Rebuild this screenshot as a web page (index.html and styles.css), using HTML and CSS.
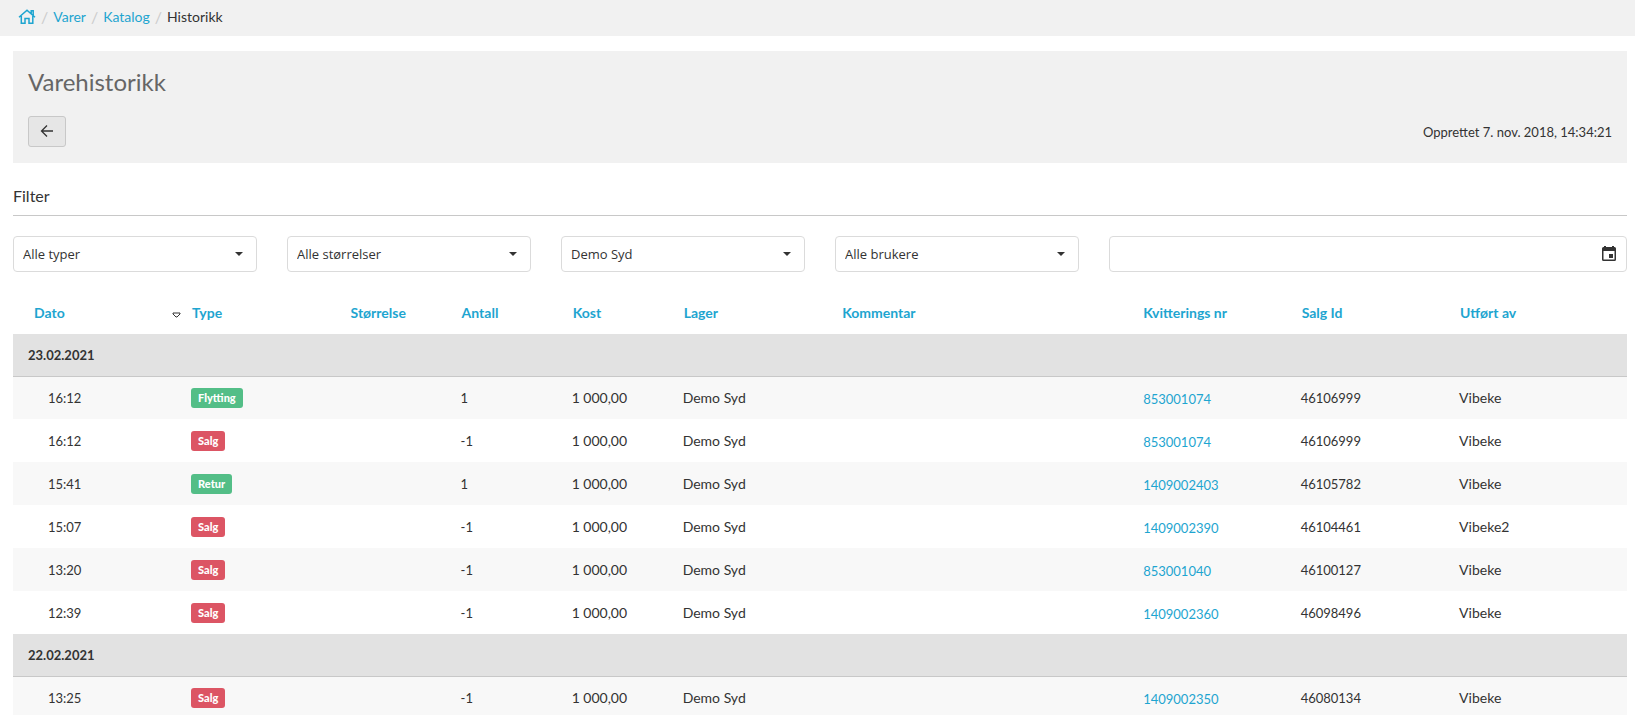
FILE: index.html
```html
<!doctype html>
<html lang="no">
<head>
	<meta charset="utf-8">
	<title>Varehistorikk</title>
	<meta name="viewport" content="width=device-width, initial-scale=1">
	<link rel="stylesheet" href="styles.css">
</head>
<body>
	<nav class="breadcrumb" aria-label="Brødsmulesti">
		<a href="#" class="home" aria-label="Hjem"><svg viewBox="0 0 18 16"><path d="M1 8.2L9 1.2L17 8.2M13.2 4.6V1.8H15.2V6.4M3.3 7V14.2H7V9.6H11V14.2H14.8V7"></path></svg></a>
		<span class="slash">/</span>
		<a href="#">Varer</a>
		<span class="slash">/</span>
		<a href="#">Katalog</a>
		<span class="slash">/</span>
		<span>Historikk</span>
	</nav>
	<main>
		<header class="panel">
			<h1>Varehistorikk</h1>
			<div class="toolbar">
				<button type="button" class="back" aria-label="Tilbake"><svg viewBox="0 0 14 14"><path d="M13 7H1.5M7 1.5L1.5 7L7 12.5"></path></svg></button>
				<span class="created">Opprettet 7. nov. 2018, 14:34:21</span>
			</div>
		</header>
		<h2>Filter</h2>
		<form class="filters">
			<div class="select">
				<select aria-label="Type"><option>Alle typer</option></select>
			</div>
			<div class="select">
				<select aria-label="Størrelse"><option>Alle størrelser</option></select>
			</div>
			<div class="select">
				<select aria-label="Lager"><option>Demo Syd</option></select>
			</div>
			<div class="select">
				<select aria-label="Bruker"><option>Alle brukere</option></select>
			</div>
			<div class="date">
				<input type="text" aria-label="Dato">
				<button type="button" aria-label="Velg dato"><svg viewBox="0 0 14 16"><path fill-rule="evenodd" d="M2 1V0H4V1H10V0H12V1H12.5Q14 1 14 2.5V13.5Q14 15 12.5 15H1.5Q0 15 0 13.5V2.5Q0 1 1.5 1ZM1.5 5V13.5H12.5V5ZM7 8H11V12H7Z"></path></svg></button>
			</div>
		</form>
		<table class="history">
			<colgroup>
				<col class="col-date">
				<col class="col-medium">
				<col class="col-small">
				<col class="col-small">
				<col class="col-small">
				<col class="col-medium">
				<col class="col-large">
				<col class="col-medium">
				<col class="col-medium">
				<col>
			</colgroup>
			<thead>
				<tr>
					<th><div class="sorted"><a href="#">Dato</a><svg viewBox="0 0 9 6"><path d="M1 1H8V2L5 5H4L1 2Z"></path></svg></div></th>
					<th><a href="#">Type</a></th>
					<th><a href="#">Størrelse</a></th>
					<th><a href="#">Antall</a></th>
					<th><a href="#">Kost</a></th>
					<th><a href="#">Lager</a></th>
					<th><a href="#">Kommentar</a></th>
					<th><a href="#">Kvitterings nr</a></th>
					<th><a href="#">Salg Id</a></th>
					<th><a href="#">Utført av</a></th>
				</tr>
			</thead>
			<tbody>
				<tr class="group"><th colspan="10">23.02.2021</th></tr>
				<tr><td class="num">16:12</td><td><span class="badge green">Flytting</span></td><td></td><td class="num">1</td><td>1 000,00</td><td>Demo Syd</td><td></td><td class="num link"><a href="#">853001074</a></td><td class="num">46106999</td><td>Vibeke</td></tr>
				<tr><td class="num">16:12</td><td><span class="badge red">Salg</span></td><td></td><td class="num">-1</td><td>1 000,00</td><td>Demo Syd</td><td></td><td class="num link"><a href="#">853001074</a></td><td class="num">46106999</td><td>Vibeke</td></tr>
				<tr><td class="num">15:41</td><td><span class="badge green">Retur</span></td><td></td><td class="num">1</td><td>1 000,00</td><td>Demo Syd</td><td></td><td class="num link"><a href="#">1409002403</a></td><td class="num">46105782</td><td>Vibeke</td></tr>
				<tr><td class="num">15:07</td><td><span class="badge red">Salg</span></td><td></td><td class="num">-1</td><td>1 000,00</td><td>Demo Syd</td><td></td><td class="num link"><a href="#">1409002390</a></td><td class="num">46104461</td><td>Vibeke2</td></tr>
				<tr><td class="num">13:20</td><td><span class="badge red">Salg</span></td><td></td><td class="num">-1</td><td>1 000,00</td><td>Demo Syd</td><td></td><td class="num link"><a href="#">853001040</a></td><td class="num">46100127</td><td>Vibeke</td></tr>
				<tr><td class="num">12:39</td><td><span class="badge red">Salg</span></td><td></td><td class="num">-1</td><td>1 000,00</td><td>Demo Syd</td><td></td><td class="num link"><a href="#">1409002360</a></td><td class="num">46098496</td><td>Vibeke</td></tr>
			</tbody>
			<tbody>
				<tr class="group"><th colspan="10">22.02.2021</th></tr>
				<tr><td class="num">13:25</td><td><span class="badge red">Salg</span></td><td></td><td class="num">-1</td><td>1 000,00</td><td>Demo Syd</td><td></td><td class="num link"><a href="#">1409002350</a></td><td class="num">46080134</td><td>Vibeke</td></tr>
			</tbody>
		</table>
	</main>
</body>
</html>
```
FILE: styles.css
```css
* {
	box-sizing: border-box;
}
body {
	margin: 0;
	background-color: #FFFFFF;
	color: #333333;
	font-family: Lato, sans-serif;
	font-size: 14px;
	line-height: 20px;
}
a {
	color: #1EA5D0;
	text-decoration: none;
}
svg {
	display: block;
	fill: none;
	stroke: currentColor;
}
.breadcrumb {
	display: flex;
	align-items: center;
	gap: 5px;
	height: 36px;
	padding: 0 18px 2px;
	background-color: #F1F1F1;
}
.breadcrumb svg {
	width: 18px;
	height: 16px;
	stroke-width: 1.5;
}
.slash {
	color: #CCCCCC;
	font-size: 16px;
}
main {
	padding: 15px 8px 0 13px;
}
.panel {
	padding: 15px 15px 16px;
	background-color: #F1F1F1;
}
h1 {
	margin: 0 0 18px;
	color: #666666;
	font-size: 24px;
	font-weight: normal;
	line-height: 32px;
}
.toolbar {
	display: flex;
	justify-content: space-between;
	align-items: center;
}
.created, .num {
	font-size: 13px;
}
.back {
	display: flex;
	justify-content: center;
	align-items: center;
	width: 38px;
	height: 31px;
	padding: 0 0 2px;
	border: 1px solid #C8C8C8;
	border-radius: 3px;
	background-color: #E6E6E6;
	color: #333333;
}
.back svg {
	width: 14px;
	height: 14px;
	stroke-width: 1.3;
}
h2 {
	margin: 22px 0 20px;
	padding-bottom: 8px;
	border-bottom: 1px solid #C8C8C8;
	font-size: 16px;
	font-weight: normal;
	line-height: 22px;
}
.filters {
	display: grid;
	grid-template-columns: repeat(6, 1fr);
	gap: 30px;
}
.select, .date {
	position: relative;
	display: flex;
	height: 36px;
	border: 1px solid #DBDBDB;
	border-radius: 4px;
}
.date {
	grid-column: span 2;
}
.select::after {
	content: "";
	position: absolute;
	top: 15px;
	right: 13px;
	border: 4px solid transparent;
	border-top-color: #333333;
	border-bottom: 0;
	pointer-events: none;
}
select, input {
	flex: 1;
	min-width: 0;
	padding: 0 9px;
	border: 0;
	border-radius: 4px;
	appearance: none;
	background: none;
	color: #333333;
	font-family: "Open Sans", sans-serif;
	font-size: 13px;
}
.date button {
	padding: 0 10px;
	border: 0;
	background: none;
	color: #333333;
}
.date svg {
	width: 14px;
	height: 16px;
	fill: currentColor;
	stroke: none;
}
.history {
	width: 100%;
	table-layout: fixed;
	border-collapse: collapse;
}
.col-date {
	width: 10.6%;
}
.col-small {
	width: 6.88%;
}
.col-medium {
	width: 9.82%;
}
.col-large {
	width: 18.65%;
}
th, td {
	padding: 0 7px;
	text-align: left;
}
thead th {
	height: 62px;
	padding: 20px 8px 0;
}
thead th:first-child {
	padding: 20px 3px 0 21px;
}
.sorted {
	display: flex;
	justify-content: space-between;
	align-items: center;
}
.sorted svg {
	width: 9px;
	height: 6px;
	margin-top: 4px;
}
td {
	height: 43px;
}
td:first-child {
	padding-left: 35px;
}
td.link {
	padding: 2px 8px 0;
}
tbody tr:nth-child(even) {
	background-color: #F8F8F8;
}
.group th {
	height: 42px;
	padding: 0 15px;
	border-bottom: 1px solid #C8C8C8;
	background-color: #E2E2E2;
	font-size: 13px;
}
.badge {
	display: inline-block;
	padding: 0 7px;
	border-radius: 3px;
	color: #FFFFFF;
	font-size: 11px;
	font-weight: 900;
	vertical-align: middle;
}
.green {
	background-color: #53BE87;
}
.red {
	background-color: #DC5564;
}
```
